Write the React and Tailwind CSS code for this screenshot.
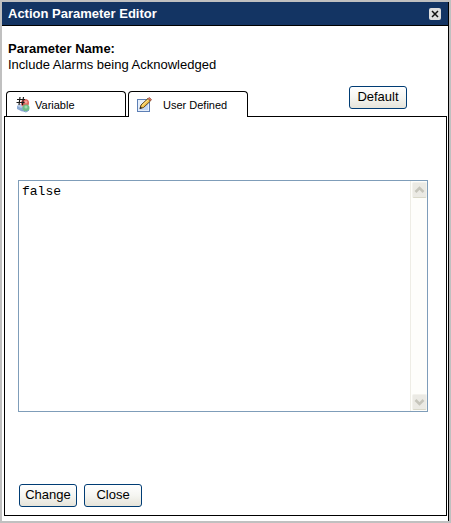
import React, {useState} from 'react'

const buttonClass = 'h-[23px] w-[58px] shrink-0 rounded-[3px] border border-[#003c74] bg-linear-to-b from-white via-[#f5f5f1] to-[#e6e4da] pb-0.5 text-[13px] leading-4 text-black'

function VariableIcon(){
  return (
    <svg width="16" height="16" viewBox="0 0 16 16" className="shrink-0" aria-hidden="true">
      <path d="M2 9l4-2 4 2v4l-3 1.5L2 12z" fill="#8aa9d3" />
      <path d="M2 9l4-2 4 2-4 2z" fill="#b9cdea" />
      <circle cx="10" cy="6" r="4" fill="#e0645c" />
      <circle cx="11" cy="5" r="1.5" fill="#f3a49c" />
      <circle cx="11" cy="11" r="3.5" fill="#6fbd86" />
      <circle cx="11" cy="10" r="1.5" fill="#a5dbb0" />
      <path d="M7 13.5l4 1.5 3-2" fill="none" stroke="#7f9fcb" />
      <path d="M5 0L4 8M8.5 0L7.5 8M2 2.5h8M1.5 5.5h8" fill="none" stroke="#1c1c1c" strokeWidth="1.2" />
    </svg>
  )
}

function EditIcon(){
  return (
    <svg width="16" height="16" viewBox="0 0 16 16" className="shrink-0" aria-hidden="true">
      <rect x=".5" y="2.5" width="12" height="12" fill="#e6effb" stroke="#5d7fb5" />
      <path d="M2 13h9V5z" fill="#c3d6f3" />
      <path d="M3 11.5L4 8l7-6.5 2.5 2.5-7 6.5z" fill="#f2c24e" stroke="#5c4420" />
      <path d="M5 8.5l6.5-6" stroke="#ffe99a" />
      <path d="M11 1.5L12.5.5l2 2L13.5 4z" fill="#d9735f" stroke="#8b4a3c" strokeWidth=".6" />
      <path d="M2.5 12L3.5 9.5 5 11z" fill="#222" />
    </svg>
  )
}

function ScrollButton({label, up}){
  return (
    <button aria-label={label} className="flex h-4 w-[15px] items-center justify-center rounded-[2px] border border-[#f3f2ec] border-b-[#d9d8c9] bg-[#ebeae4]">
      <svg width="11" height="8" viewBox="0 0 11 8" aria-hidden="true">
        <path d={up ? 'M1.5 6L5.5 2L9.5 6' : 'M1.5 2L5.5 6L9.5 2'} fill="none" stroke="#c6c5bb" strokeWidth="2.5" />
      </svg>
    </button>
  )
}

export default function App(){
  const [tab, setTab] = useState('user')
  const [value, setValue] = useState('false')

  const tabClass = 'flex w-[120px] items-center rounded-t-[4px] border border-b-0 border-black bg-white pt-px text-[11px] leading-4 text-black'

  return (
    <div className="flex min-h-screen flex-col border-2 border-[#c0c0c0] bg-white font-['Liberation_Sans',Arial,sans-serif] text-[13px] text-black">
      <div className="flex flex-1 flex-col border-r border-black">
        <header className="flex h-6 items-center justify-between border-b border-black bg-[#133463] pr-[7px] pl-1.5">
          <h1 className="text-[13px] font-bold text-white">Action Parameter Editor</h1>
          <button aria-label="Close window" className="flex size-3 items-center justify-center rounded-[2px] bg-[#dedede]">
            <svg width="8" height="8" viewBox="0 0 8 8" aria-hidden="true">
              <path d="M1 1l6 6M7 1L1 7" stroke="#111" strokeWidth="1.5" />
            </svg>
          </button>
        </header>

        <div className="px-1.5 pt-[15px] leading-4">
          <h2 className="font-bold">Parameter Name:</h2>
          <p>Include Alarms being Acknowledged</p>
        </div>

        <div className="mt-[13px] flex h-[30px] items-start justify-between pr-[41px] pl-1">
          <div role="tablist" className="flex h-full items-end gap-0.5 pt-[5px]">
            <button role="tab" aria-selected={tab==='variable'} onClick={()=>setTab('variable')} className={`${tabClass} ${tab==='variable' ? 'relative -mb-px h-[26px]' : 'h-[25px]'} gap-1 pl-2`}>
              <VariableIcon />
              Variable
            </button>
            <button role="tab" aria-selected={tab==='user'} onClick={()=>setTab('user')} className={`${tabClass} ${tab==='user' ? 'relative -mb-px h-[26px]' : 'h-[25px]'} gap-2.5 pl-2`}>
              <EditIcon />
              User Defined
            </button>
          </div>
          <button className={buttonClass}>Default</button>
        </div>

        <main className="mr-px mb-[5px] ml-0.5 flex flex-1 flex-col border border-black pr-[18px] pb-2 pl-[13px]">
          <div className="mt-[63px] flex min-h-24 flex-1 border border-[#7f9db9]">
            <textarea aria-label="Parameter value" value={value} onChange={e=>setValue(e.target.value)} className="min-w-0 flex-1 resize-none px-[3px] py-[3px] font-['Liberation_Mono','Courier_New',monospace] text-[13px] leading-4 outline-none" />
            <div className="flex w-[17px] flex-col items-center justify-between border-l border-[#eeede5] bg-[#fefefb] py-px">
              <ScrollButton label="Scroll up" up />
              <ScrollButton label="Scroll down" />
            </div>
          </div>
          <div className="mt-18 flex gap-[7px] pl-px">
            <button className={buttonClass}>Change</button>
            <button className={buttonClass}>Close</button>
          </div>
        </main>
      </div>
    </div>
  )
}
